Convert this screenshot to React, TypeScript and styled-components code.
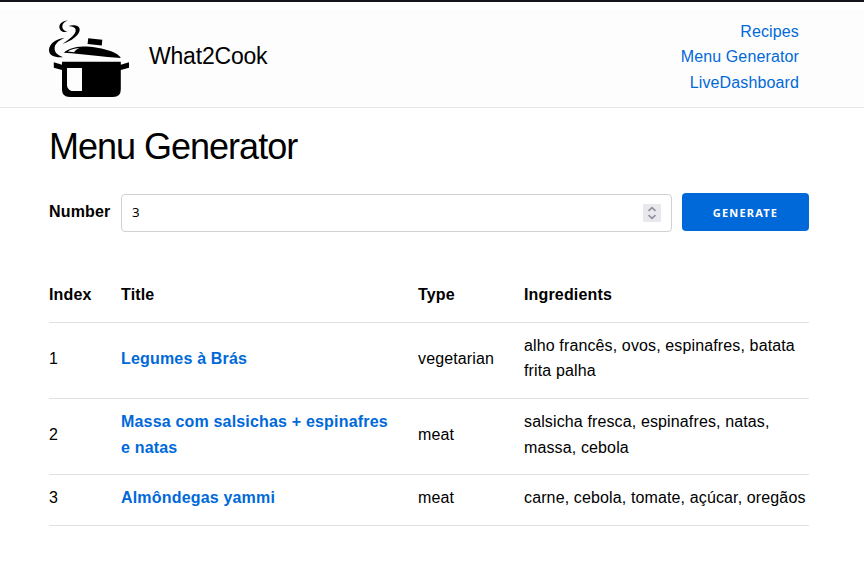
import React, { useState } from "react";
import styled, { createGlobalStyle } from "styled-components";

const GlobalStyle = createGlobalStyle`
  *, *::before, *::after { box-sizing: border-box; }
  body {
    margin: 0;
    background: #fff;
    color: #000;
    font-family: "Liberation Sans", Helvetica, Arial, sans-serif;
    font-size: 16px;
    font-weight: 400;
    letter-spacing: 0.13px;
    line-height: 25.6px;
  }
`;

const Page = styled.div`
  min-height: 562px;
  border-top: 2px solid #15141a;
`;

const Header = styled.header`
  height: 106px;
  padding: 0 55px 0 49px;
  display: flex;
  justify-content: space-between;
  background: linear-gradient(#fff 0 8px, #fdfdfd 8px);
  border-bottom: 1px solid #e6e6e6;
`;

const Brand = styled.a`
  display: flex;
  align-items: center;
  gap: 20px;
  padding-top: 6px;
  color: #000;
  font-size: 23px;
  letter-spacing: -0.2px;

  span { margin-top: -2px; }
`;

const Logo = styled.svg`
  width: 80px;
  height: 80px;
  display: block;
`;

const Nav = styled.nav`
  display: flex;
  flex-direction: column;
  align-items: flex-end;
  padding: 16.6px 10px 0 0;
`;

const Link = styled.a`
  color: #0069d9;
  text-decoration: none;
`;

const Main = styled.main`
  width: 760px;
  margin-left: 49px;
`;

const Title = styled.h1`
  margin: 0;
  padding-top: 17px;
  font-size: 36px;
  font-weight: 400;
  letter-spacing: -1px;
  line-height: 43.2px;
`;

const Form = styled.form`
  display: flex;
  align-items: flex-start;
  margin-top: 25px;
`;

const Label = styled.label`
  width: 72px;
  padding-top: 6px;
  font-weight: 700;
  letter-spacing: 0.16px;
`;

const NumberField = styled.div`
  display: flex;
  align-items: center;
  justify-content: space-between;
  width: 551px;
  height: 38px;
  margin: 1px 10px 0 0;
  padding: 0 10px;
  border: 1px solid #d1d1d1;
  border-radius: 4px;
`;

const NumberInput = styled.input`
  flex: 1;
  min-width: 0;
  height: 36px;
  padding: 0 0 2px;
  border: 0;
  outline: 0;
  background: transparent;
  color: #000;
  font: 13.33px "Noto Sans", sans-serif;
`;

const Stepper = styled.svg`
  width: 18px;
  height: 18px;
  margin-top: -1px;
  background: #e9e9ed;
`;

const Button = styled.button`
  width: 127px;
  height: 38px;
  padding: 2px 0 0;
  border: 0;
  border-radius: 4px;
  background: #0069d9;
  color: #fff;
  font: 700 11px/36px "Noto Sans", sans-serif;
  letter-spacing: 1.2px;
  text-transform: uppercase;
`;

const Table = styled.table`
  width: 760px;
  margin-top: 40px;
  border-spacing: 0;
  table-layout: fixed;
`;

const Col = styled.col<{ $width: number }>`
  width: ${(p) => p.$width}px;
`;

const Head = styled.th`
  padding: 10px 0 14px;
  border-bottom: 1px solid #e1e1e1;
  text-align: left;
  font-weight: 700;
  letter-spacing: 0.16px;
`;

const Cell = styled.td<{ $gap?: number }>`
  padding: 10px ${(p) => p.$gap ?? 0}px 14px 0;
  border-bottom: 1px solid #e1e1e1;
`;

const RecipeLink = styled(Link)`
  font-weight: 700;
  letter-spacing: 0.18px;
`;

const recipes = [
  { title: "Legumes à Brás", type: "vegetarian", ingredients: "alho francês, ovos, espinafres, batata frita palha" },
  { title: "Massa com salsichas + espinafres e natas", type: "meat", ingredients: "salsicha fresca, espinafres, natas, massa, cebola" },
  { title: "Almôndegas yammi", type: "meat", ingredients: "carne, cebola, tomate, açúcar, oregãos" },
];

function PotLogo() {
  return (
    <Logo viewBox="49 18 80 80" aria-hidden="true">
      <path d="M68 20.3C62 21.3 59 24 59.4 27.4C59.8 30.8 63 32.6 67.4 32C64 30.8 62.5 29.2 62.3 26.8C62.1 24 64.3 22 68 20.3Z" />
      <path d="M68.5 26C74 24.5 79.5 25.6 79.7 29.5C79.9 35 71 41.5 62.5 43.8C69 39.5 76 34.5 75.7 30C75.5 27.4 72.5 26.3 68.5 26Z" />
      <path d="M64.5 37.8C55 39.2 49 44.5 49 50.2C49 55 54.5 58 63 57.2C57.5 55.3 54.6 52.6 54.6 48.6C54.6 44 58.2 41 64.5 37.8Z" />
      <path d="M88.2 38.3L102.3 39.8L101.8 45.5L87.6 44Z" />
      <path d="M64 52.7C66.5 49.5 75 46.3 84 46.5C99 46.8 118 51.5 120.8 58C104 57 84 53.8 64 52.7Z" />
      <path d="M67.8 51.5C70 49.4 74 48.2 79.5 47.9C76.5 49.2 75 50.5 74.2 52.2Z" fill="#fdfdfd" />
      <path d="M62 61.8H120.8V64.8L129 62.3V67.8L120.8 70V89.5Q120.8 97 113 97H69.8Q62 97 62 89.5V70L53.8 67.8V62.3L62 64.8Z" />
      <path d="M67 68H82V91H71.5Q67 89 67 85Z" fill="#fdfdfd" />
    </Logo>
  );
}

export default function App() {
  const [count, setCount] = useState("3");
  return (
    <>
      <GlobalStyle />
      <Page>
        <Header>
          <Brand>
            <PotLogo />
            <span>What2Cook</span>
          </Brand>
          <Nav>
            <Link href="#">Recipes</Link>
            <Link href="#">Menu Generator</Link>
            <Link href="#">LiveDashboard</Link>
          </Nav>
        </Header>
        <Main>
          <Title>Menu Generator</Title>
          <Form onSubmit={(e) => e.preventDefault()}>
            <Label htmlFor="count">Number</Label>
            <NumberField>
              <NumberInput id="count" inputMode="numeric" value={count} onChange={(e) => setCount(e.target.value)} />
              <Stepper viewBox="0 0 18 18" fill="none" stroke="#8f8f9d" strokeWidth="1.6">
                <path d="M5.5 6.8L9 3.6L12.5 6.8M5.5 11.2L9 14.4L12.5 11.2" />
              </Stepper>
            </NumberField>
            <Button type="submit">Generate</Button>
          </Form>
          <Table>
            <colgroup>
              <Col $width={72} />
              <Col $width={297} />
              <Col $width={106} />
              <Col $width={285} />
            </colgroup>
            <thead>
              <tr>
                <Head>Index</Head>
                <Head>Title</Head>
                <Head>Type</Head>
                <Head>Ingredients</Head>
              </tr>
            </thead>
            <tbody>
              {recipes.map((recipe, i) => (
                <tr key={recipe.title}>
                  <Cell>{i + 1}</Cell>
                  <Cell $gap={26}>
                    <RecipeLink href="#">{recipe.title}</RecipeLink>
                  </Cell>
                  <Cell>{recipe.type}</Cell>
                  <Cell>{recipe.ingredients}</Cell>
                </tr>
              ))}
            </tbody>
          </Table>
        </Main>
      </Page>
    </>
  );
}
